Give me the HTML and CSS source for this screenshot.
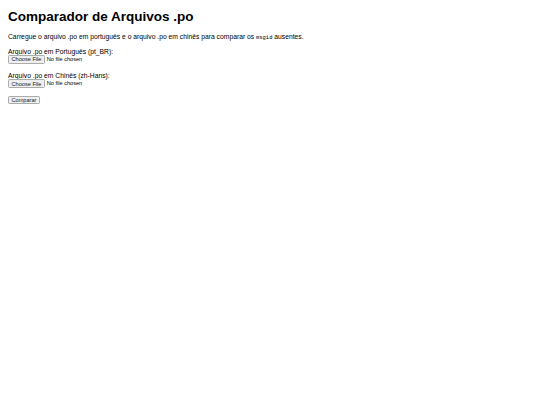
FILE: index.html
```html
<!DOCTYPE html>
<html lang="pt-BR">
<head>
<meta charset="utf-8">
<title>Comparador de Arquivos .po</title>
<link rel="stylesheet" href="styles.css">
</head>
<body>
<div class="page">
<h1 class="title">Comparador de Arquivos .po</h1>
<p class="intro">Carregue o arquivo .po em português e o arquivo .po em chinês para comparar os <code class="mono">msgid</code> ausentes.</p>
<form class="form">
  <div class="group">
    <label class="label" for="pt">Arquivo .po em Português (pt_BR):</label><br>
    <input class="file" type="file" id="pt" accept=".po">
  </div>
  <div class="group group-last">
    <label class="label" for="zh">Arquivo .po em Chinês (zh-Hans):</label><br>
    <input class="file" type="file" id="zh" accept=".po">
  </div>
  <button class="btn" type="button">Comparar</button>
</form>
</div>
</body>
</html>
```
FILE: styles.css
```css
html {
  background: #fff;
}
body {
  margin: 0;
  padding: 0 8px;
  font-family: "Liberation Sans", Arial, sans-serif;
  color: #000;
}
.page {
  zoom: 0.421875;
  padding-top: 1px;
}
.title {
  font-size: 32px;
  margin: 21px 0;
}
.intro {
  margin: 18px 0 16px;
}
.mono {
  font-family: "Liberation Mono", monospace;
  font-size: 13px;
}
.group {
  margin-bottom: 20px;
}
.group-last {
  margin-bottom: 18px;
}
.file, .btn {
  font-family: "Liberation Sans", Arial, sans-serif;
  font-size: 13.33px;
}
.btn,
.file::file-selector-button {
  background: #efefef;
  color: #222;
  border: 2px solid #ababab;
  border-radius: 3px;
  padding: 1px 6px;
  font-family: "Liberation Sans", Arial, sans-serif;
  font-size: 13.33px;
}
```
